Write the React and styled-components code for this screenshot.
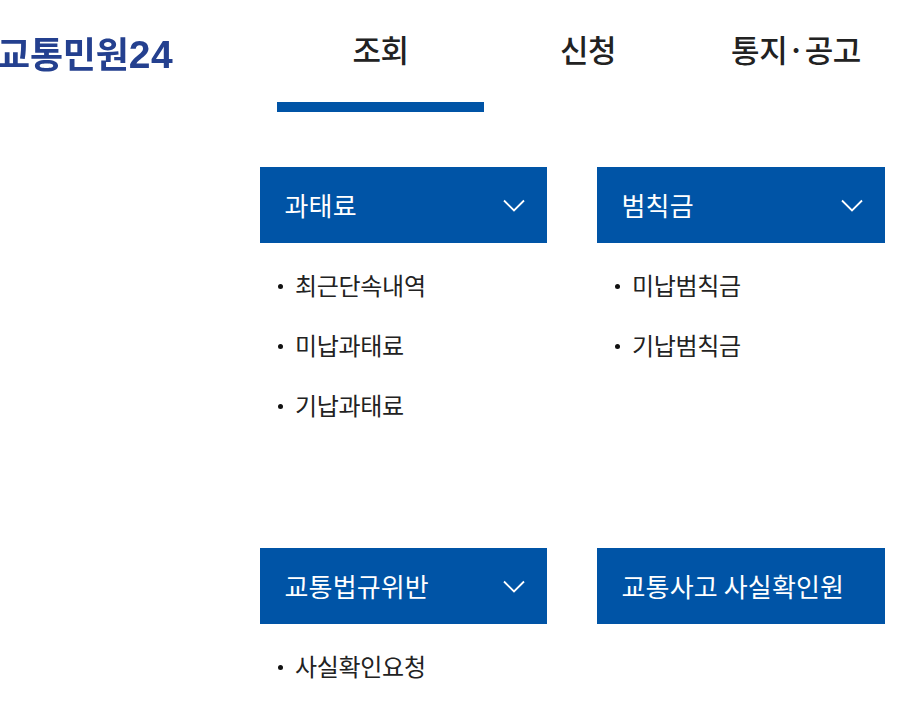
import styled, { createGlobalStyle } from "styled-components";

const GlobalStyle = createGlobalStyle`
  html, body {
    margin: 0;
    padding: 0;
    background: #fff;
    overflow: hidden;
    font-family: "Noto Sans CJK KR", "Noto Sans", sans-serif;
  }
`;

const Page = styled.div`
  width: 915px;
  height: 715px;
  overflow: hidden;
`;

const Header = styled.header`
  display: flex;
  height: 112px;
`;

const Logo = styled.div`
  width: 277px;
  flex: none;
  margin-left: -3px;
  margin-right: 3px;
  padding-top: 27px;
  font-size: 36px;
  line-height: 50px;
  font-weight: 700;
  letter-spacing: -0.2px;
  color: #24408f;
  white-space: nowrap;
  filter: blur(0.4px);
`;

const LogoNumber = styled.span`
  font-family: "Liberation Sans", sans-serif;
  font-size: 39px;
  letter-spacing: 0.5px;
`;

const Nav = styled.nav`
  display: grid;
  grid-template-columns: 207px 208px 208px;
`;

const Tab = styled.a`
  box-sizing: border-box;
  height: 112px;
  padding-top: 26px;
  text-align: center;
  font-size: 31px;
  line-height: 46px;
  font-weight: 500;
  letter-spacing: -0.4px;
  color: #222;
  border-bottom: 10px solid ${(props) => (props.active ? "#0054a6" : "transparent")};
`;

const Grid = styled.div`
  display: grid;
  grid-template-columns: 287px 288px;
  column-gap: 50px;
  margin: 55px 0 0 260px;
`;

const Section = styled.section`
  height: 381px;
`;

const SectionHead = styled.div`
  display: flex;
  align-items: center;
  justify-content: space-between;
  height: 76px;
  padding: 0 22px 0 24.5px;
  background: #0054a6;
  color: #fff;
  font-size: 26px;
  line-height: 72px;
  letter-spacing: 0.15px;
`;

const MenuList = styled.ul`
  list-style: none;
  margin: 12px 0 0;
  padding: 0;
`;

const MenuItem = styled.li`
  position: relative;
  height: 60px;
  padding-left: 35px;
  font-size: 24px;
  line-height: 60px;
  letter-spacing: -0.3px;
  color: #222;

  &::before {
    content: "";
    position: absolute;
    left: 18px;
    top: 29px;
    width: 5px;
    height: 5px;
    border-radius: 50%;
    background: #111;
  }
`;

const Chevron = () => (
  <svg width="22" height="13" viewBox="0 0 22 13" fill="none">
    <path d="M1 1.5L11 11.5L21 1.5" stroke="#fff" strokeWidth="1.8" />
  </svg>
);

const sections = [
  { title: "과태료", items: ["최근단속내역", "미납과태료", "기납과태료"], arrow: true },
  { title: "범칙금", items: ["미납범칙금", "기납범칙금"], arrow: true },
  { title: "교통법규위반", items: ["사실확인요청"], arrow: true },
  { title: "교통사고 사실확인원", items: [], arrow: false },
];

const App = () => {
  return (
    <Page>
      <GlobalStyle />
      <Header>
        <Logo>
          교통민원<LogoNumber>24</LogoNumber>
        </Logo>
        <Nav>
          <Tab active>조회</Tab>
          <Tab>신청</Tab>
          <Tab>통지·공고</Tab>
        </Nav>
      </Header>
      <Grid>
        {sections.map((section) => (
          <Section key={section.title}>
            <SectionHead>
              {section.title}
              {section.arrow && <Chevron />}
            </SectionHead>
            <MenuList>
              {section.items.map((item) => (
                <MenuItem key={item}>{item}</MenuItem>
              ))}
            </MenuList>
          </Section>
        ))}
      </Grid>
    </Page>
  );
};

export default App;
